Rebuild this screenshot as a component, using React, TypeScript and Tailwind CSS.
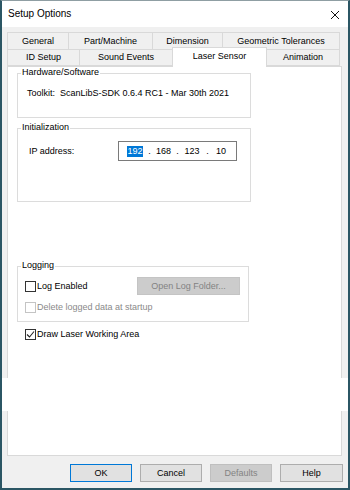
import React from "react";

function Tab({ label, w, selected }: { label: string; w: string; selected?: boolean }) {
  if (selected) {
    return (
      <div
        className={`${w} relative z-10 -mt-[2px] -mb-px h-[20px] -ml-px flex items-center justify-center border border-b-0 border-[#d9d9d9] bg-white pb-[2px]`}
      >
        {label}
      </div>
    );
  }
  return (
    <div className={`${w} -ml-px first:ml-0 flex h-full items-center justify-center border border-[#d9d9d9] bg-[#f0f0f0]`}>
      {label}
    </div>
  );
}

function Check({ checked, disabled }: { checked?: boolean; disabled?: boolean }) {
  return (
    <div
      className={`flex h-[11px] w-[11px] shrink-0 items-center justify-center border bg-white ${
        disabled ? "border-[#c4c4c4]" : "border-[#333333]"
      }`}
    >
      {checked && (
        <svg width="9" height="9" viewBox="0 0 9 9">
          <path d="M1 4.5 L3.5 7 L8 1.5" fill="none" stroke="#222" strokeWidth="1.1" />
        </svg>
      )}
    </div>
  );
}

function Group({ label, className, children }: { label: string; className: string; children?: React.ReactNode }) {
  return (
    <div className={`relative border border-[#dcdcdc] ${className}`}>
      <span className="absolute -top-[7px] left-[3px] bg-white px-[1px] leading-[11px]">{label}</span>
      {children}
    </div>
  );
}

export default function App() {
  return (
    <div className="relative flex h-[490px] w-[350px] flex-col overflow-hidden border-x-2 border-b-2 border-t border-x-[#2b5664] border-b-[#2b5664] border-t-[#8f9ea3] bg-[#f0f0f0] font-['Liberation_Sans',Arial,sans-serif] text-[9px] leading-[11px] text-black">
      {/* title bar */}
      <div className="flex h-[26px] shrink-0 items-center justify-between bg-white pl-[6px] pr-[8px]">
        <span className="text-[10px] leading-[12px]">Setup Options</span>
        <svg width="10" height="10" viewBox="0 0 10 10" className="mt-[1px]">
          <path d="M1 1 L9 9 M9 1 L1 9" stroke="#111" strokeWidth="1" fill="none" />
        </svg>
      </div>

      {/* body */}
      <div className="flex flex-1 flex-col px-[5px] pt-[5px]">
        <div className="flex h-[18px] w-[333px]">
          <Tab label="General" w="w-[62px]" />
          <Tab label="Part/Machine" w="w-[85px]" />
          <Tab label="Dimension" w="w-[71px]" />
          <Tab label="Geometric Tolerances" w="w-[118px]" />
        </div>
        <div className="-mt-px flex h-[17px] w-[333px] items-end">
          <Tab label="ID Setup" w="w-[73px]" />
          <Tab label="Sound Events" w="w-[94px]" />
          <Tab label="Laser Sensor" w="w-[95px]" selected />
          <Tab label="Animation" w="w-[74px]" />
        </div>

        {/* panel */}
        <div className="flex h-[390px] w-[335px] flex-col border border-[#d9d9d9] bg-white pl-[9px]">
          <Group label="Hardware/Software" className="mt-[6px] h-[45px] w-[234px] pl-[9px] pt-[14px]">
            <div>Toolkit:&nbsp; ScanLibS-SDK 0.6.4 RC1 - Mar 30th 2021</div>
          </Group>

          <Group label="Initialization" className="mt-[10px] h-[74px] w-[234px] pl-[11px] pt-[12px]">
            <div className="flex items-center">
              <span className="w-[89px]">IP address:</span>
              <div className="flex h-[20px] w-[119px] items-center border border-[#7a7a7a] pl-[8px]">
                <span className="flex h-[11px] w-[16px] items-center justify-center bg-[#0078d7] text-white">192</span>
                <span className="w-[13px] text-center">.</span>
                <span className="w-[15px] text-center">168</span>
                <span className="w-[13px] text-center">.</span>
                <span className="w-[16px] text-center">123</span>
                <span className="w-[15px] text-center">.</span>
                <span className="pl-[1px]">10</span>
              </div>
            </div>
          </Group>

          <Group label="Logging" className="mt-[64px] h-[56px] w-[232px] pl-[7px] pt-[10px]">
            <div className="flex h-[18px] items-center">
              <div className="flex w-[112px] items-center">
                <Check />
                <span className="ml-[1px]">Log Enabled</span>
              </div>
              <div className="flex h-[18px] w-[103px] items-center justify-center border border-[#c4c4c4] bg-[#cccccc] text-[#838383]">
                Open Log Folder...
              </div>
            </div>
            <div className="mt-[7px] flex items-center">
              <Check disabled />
              <span className="ml-[1px] text-[#8a8a8a]">Delete logged data at startup</span>
            </div>
          </Group>

          <div className="mt-[7px] flex items-center pl-[8px]">
            <Check checked />
            <span className="ml-[1px]">Draw Laser Working Area</span>
          </div>
        </div>

        {/* buttons */}
        <div className="mt-[8px] flex justify-end gap-[8px]">
          <div className="flex h-[18px] w-[62px] items-center justify-center border border-[#0078d7] bg-[#e1e1e1]">OK</div>
          <div className="flex h-[18px] w-[62px] items-center justify-center border border-[#adadad] bg-[#e1e1e1]">Cancel</div>
          <div className="flex h-[18px] w-[62px] items-center justify-center border border-[#bfbfbf] bg-[#cccccc] text-[#838383]">Defaults</div>
          <div className="flex h-[18px] w-[63px] items-center justify-center border border-[#adadad] bg-[#e1e1e1]">Help</div>
        </div>
      </div>

      {/* torn white strips over the window's side edges */}
      <div className="pointer-events-none absolute -left-[2px] top-[377px] h-[33px] w-[9px] bg-white" />
      <div className="pointer-events-none absolute -right-[2px] top-[377px] h-[33px] w-[9px] bg-white" />
    </div>
  );
}
